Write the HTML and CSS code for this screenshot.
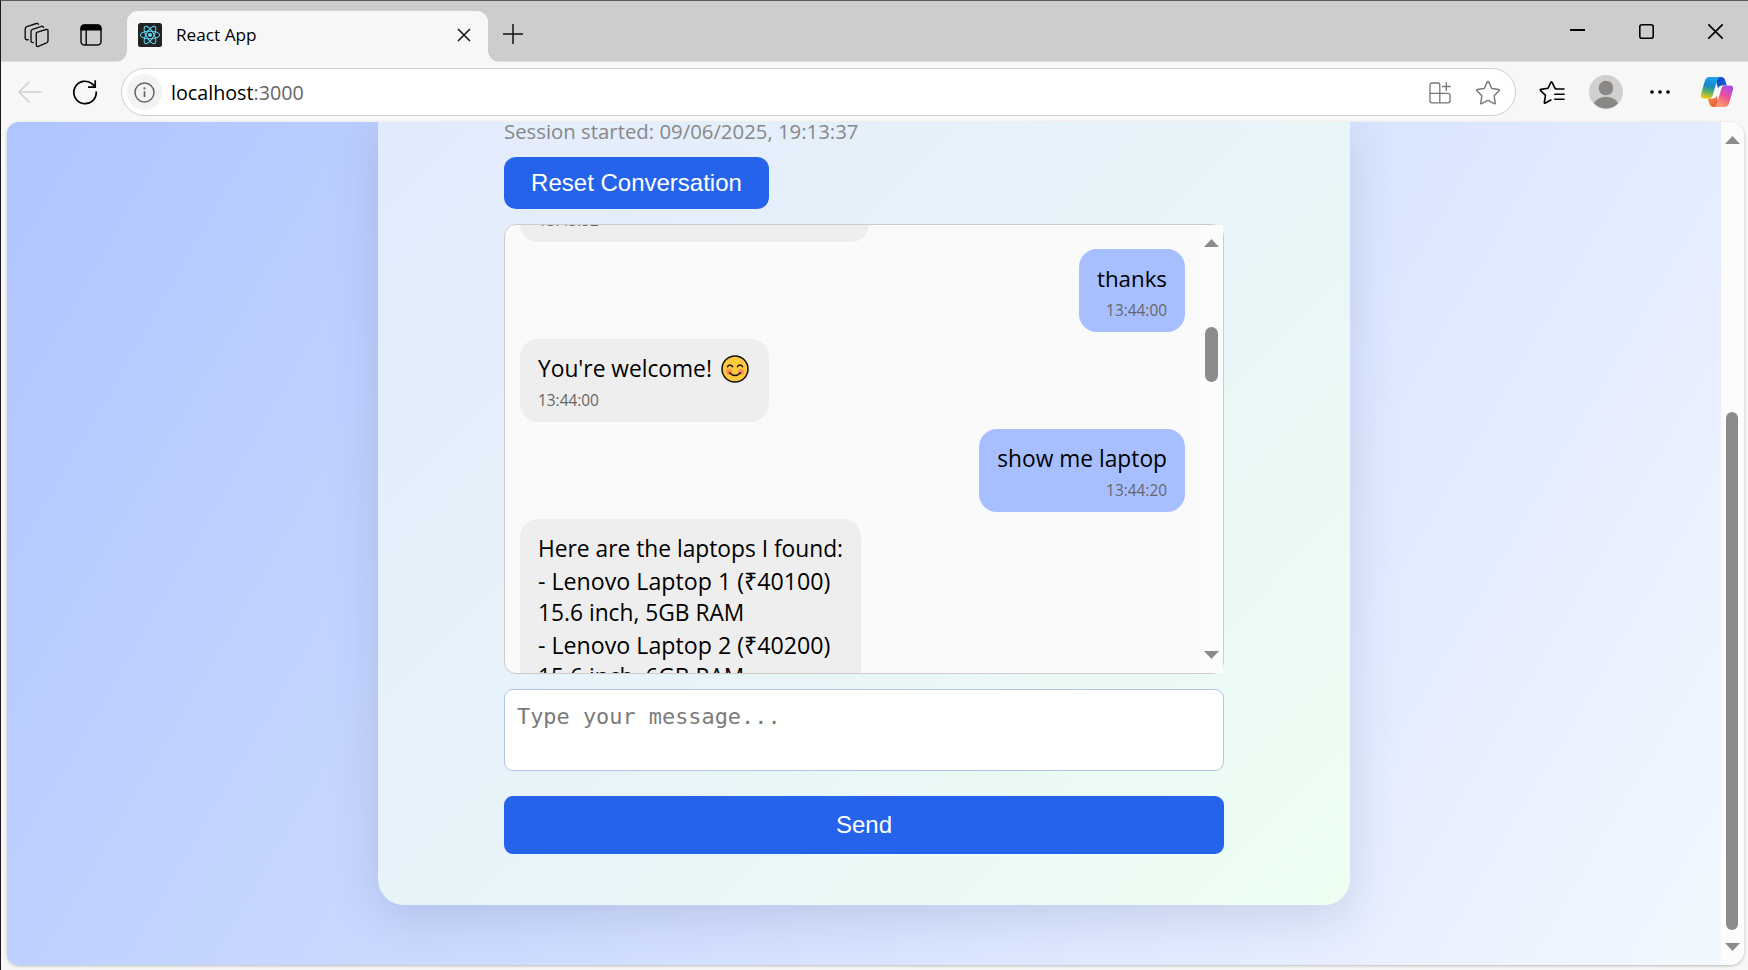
FILE: index.html
```html
<!DOCTYPE html>
<html lang="en">
<head>
<meta charset="utf-8">
<title>React App</title>
<link rel="stylesheet" href="styles.css">
</head>
<body>
<div class="window">
  <header class="titlebar">
    <div class="tab-tools">
      <svg class="icon-workspaces" width="26" height="26" viewBox="0 0 26 26" fill="none" stroke="#111" stroke-width="1.4" stroke-linejoin="round" stroke-linecap="round">
        <path d="M12.800 10.400 22 7.500q2-.5 2 1.500v9.700q0 1.600-1.500 2.100l-8.200 3.500q-2 .6-2-1.300V12q0-1.200 .5-1.600z"/>
        <path d="M9.400 20.600q-2.400.2-2.400-1.700V9.400q0-1.600 1.600-2.100L17.400 4.400q1.700-.4 2.100.9"/>
        <path d="M4.200 17.800q-3 .2-3-1.900V7q0-1.700 1.700-2.300L12.300 1.500q1.500-.4 2.100.8"/>
      </svg>
      <svg class="icon-vertical-tabs" width="24" height="24" viewBox="0 0 24 24" fill="none" stroke="#111" stroke-width="1.5">
        <rect x="2" y="2" width="20" height="20" rx="3.500"/>
        <path d="M1.500 7.500V5q0-3.500 3.500-3.500h14q3.500 0 3.500 3.500v2.500z" fill="#000" stroke="none"/>
        <path d="M7.200 7v15"/>
      </svg>
    </div>
    <div class="tab">
      <svg width="24" height="24" viewBox="0 0 24 24">
        <rect width="24" height="24" rx="2.500" fill="#222"/>
        <g fill="none" stroke="#61dafb" stroke-width="1">
          <ellipse cx="12" cy="12" rx="9.800" ry="3.800"/>
          <ellipse cx="12" cy="12" rx="9.800" ry="3.800" transform="rotate(60 12 12)"/>
          <ellipse cx="12" cy="12" rx="9.800" ry="3.800" transform="rotate(120 12 12)"/>
        </g>
        <circle cx="12" cy="12" r="2" fill="#61dafb"/>
      </svg>
      <span class="tab-title">React App</span>
      <svg class="tab-close" width="14" height="14" viewBox="0 0 14 14" stroke="#111" stroke-width="1.500"><path d="M1 1l12 12M13 1 1 13"/></svg>
    </div>
    <svg class="new-tab" width="20" height="20" viewBox="0 0 20 20" stroke="#111" stroke-width="1.500"><path d="M10 0v20M0 10h20"/></svg>
    <div class="window-controls">
      <svg width="15" height="15" viewBox="0 0 15 15" stroke="#000" stroke-width="2"><path d="M0 6h15"/></svg>
      <svg width="15" height="15" viewBox="0 0 15 15" fill="none" stroke="#000" stroke-width="1.600"><rect x=".8" y=".8" width="13.400" height="13.400" rx="2"/></svg>
      <svg width="15" height="15" viewBox="0 0 15 15" stroke="#000" stroke-width="1.600"><path d="M.3.3l14.400 14.400M14.700.3.300 14.700"/></svg>
    </div>
  </header>

  <div class="toolbar">
    <svg class="back" width="24" height="22" viewBox="0 0 24 22" fill="none" stroke="#cfcfcf" stroke-width="1.500" stroke-linecap="round" stroke-linejoin="round"><path d="M23 11H1M11 1 1 11l10 10"/></svg>
    <svg class="reload" width="26" height="26" viewBox="0 0 26 26" fill="none" stroke="#000" stroke-width="1.700"><path d="M24.200 12.500A11.200 11.200 0 1 1 20.600 5.200L23 7.800M23.200 1.200v6.900h-7.200"/></svg>
    <div class="address">
      <span class="site-info">
        <svg width="21" height="21" viewBox="0 0 21 21" fill="none" stroke="#666" stroke-width="1.500"><circle cx="10.500" cy="10.500" r="9.500"/><path d="M10.500 9.200v5.800" stroke-width="1.700"/><circle cx="10.500" cy="6.400" r="1.100" fill="#666" stroke="none"/></svg>
      </span>
      <span class="url">localhost<span class="port">:3000</span></span>
      <svg class="apps" width="22" height="23" viewBox="0 0 22 23" fill="none" stroke="#777" stroke-width="1.300"><path d="M10.800 21.800V4q0-2-2-2H3Q1 2 1 4v15.800q0 2 2 2h16q2 0 2-2v-5.500q0-2-2-2H1M17.300 1v9M13 5.500h8.700"/></svg>
      <svg class="star" width="26" height="25" viewBox="0 0 26 25" fill="none" stroke="#777" stroke-width="1.400" stroke-linejoin="round"><path d="M13 1.500q.5 0 .8.600l3 6.400 6.800 1q1.400.3.500 1.300l-5 5 1.200 7q.2 1.400-1.100.8L13 20.300l-6.200 3.300q-1.300.6-1.100-.8l1.200-7-5-5q-.9-1 .5-1.300l6.800-1 3-6.400q.3-.6.800-.6z"/></svg>
    </div>
    <svg class="favorites" width="26" height="25" viewBox="0 0 26 25" fill="none" stroke="#000" stroke-width="1.600" stroke-linecap="round" stroke-linejoin="round"><path d="M17 8.500 16 8.300l-2.900-6q-.6-1-1.200 0L8.900 8.300 2 9.400q-1.200.3-.4 1.200l4.900 4.800-1.200 7q-.1 1.100 1 .6l5.600-3M16.500 9H25M15.800 14.200H25M15.800 19.200H25"/></svg>
    <svg class="avatar" width="34" height="34" viewBox="0 0 34 34">
      <clipPath id="avatar-clip"><circle cx="17" cy="17" r="16.500"/></clipPath>
      <circle cx="17" cy="17" r="17" fill="#d2d0ce"/>
      <g fill="#8a8886" clip-path="url(#avatar-clip)"><circle cx="17" cy="13" r="7.300"/><ellipse cx="17" cy="31" rx="12.500" ry="9.300"/></g>
    </svg>
    <svg class="more" width="20" height="4" viewBox="0 0 20 4"><circle cx="2" cy="2" r="1.800"/><circle cx="10" cy="2" r="1.800"/><circle cx="18" cy="2" r="1.800"/></svg>
    <svg class="copilot" width="34" height="32" viewBox="0 0 34 32">
      <defs>
        <linearGradient id="cp-a" x1=".5" y1="0" x2=".3" y2="1"><stop offset="0" stop-color="#1fa3ee"/><stop offset=".4" stop-color="#1687c8"/><stop offset=".65" stop-color="#4eae70"/><stop offset="1" stop-color="#f4cf0b"/></linearGradient>
        <linearGradient id="cp-b" x1=".8" y1="0" x2=".3" y2="1"><stop offset="0" stop-color="#a44bf0"/><stop offset=".5" stop-color="#ee5396"/><stop offset="1" stop-color="#ffa368"/></linearGradient>
        <linearGradient id="cp-c" x1="0" y1="0" x2="1" y2=".6"><stop offset="0" stop-color="#0c3fb5"/><stop offset="1" stop-color="#1c62e0"/></linearGradient>
        <linearGradient id="cp-d" x1="0" y1="0" x2="1" y2="1"><stop offset="0" stop-color="#f59a3d"/><stop offset="1" stop-color="#e8483f"/></linearGradient>
      </defs>
      <path d="M15 1h6.500q2.600 0 3.500 2.800L26.800 9.500H22q-3 0-4 3z" fill="url(#cp-c)"/>
      <path d="M19 31h-6q-2.600 0-3.400-2.800L7.800 22.500H13q3 0 3.800-3z" fill="url(#cp-d)"/>
      <path d="M9.500 1H20q-2 .6-2.900 3.600l-4.500 14.800q-1 3.100-4.200 3.100H4Q-.2 22.500 1.200 17.400L4.800 5Q6 1 9.500 1z" fill="url(#cp-a)"/>
      <path d="M24.500 31H14q2-.6 2.900-3.600l4.500-14.800q1-3.100 4.200-3.100H30q4.200 0 2.800 5.100L29.200 27q-1.200 4-4.700 4z" fill="url(#cp-b)"/>
    </svg>
  </div>

  <div class="viewport">
    <main class="page">
      <section class="card">
        <p class="session">Session started: 09/06/2025, 19:13:37</p>
        <button class="reset">Reset Conversation</button>
        <div class="chat">
          <div class="pane">
            <div class="messages">
              <div class="message bot clipped"><span class="time">13:43:52</span></div>
              <div class="message user"><span class="short">thanks</span><span class="time">13:44:00</span></div>
              <div class="message bot">
                <span class="with-emoji">You're welcome!
                  <svg width="28" height="28" viewBox="0 0 28 28" fill="none" stroke="#111" stroke-width="1.500" stroke-linecap="round">
                    <circle cx="14" cy="14" r="13" fill="#ffc93d"/>
                    <circle cx="8" cy="17" r="3" fill="#ff8f5a" stroke="none"/><circle cx="20" cy="17" r="3" fill="#ff8f5a" stroke="none"/>
                    <path d="M6.500 11.600q2.500-3 5 0M16.500 11.600q2.500-3 5 0M8.500 17.800q5.500 5.600 11 0"/>
                  </svg>
                </span>
                <span class="time">13:44:00</span>
              </div>
              <div class="message user"><span>show me laptop</span><span class="time">13:44:20</span></div>
              <div class="message bot listing">
                <span>Here are the laptops I found:</span>
                <span class="product">- Lenovo Laptop 1 (₹40100)</span>
                <span>15.6 inch, 5GB RAM</span>
                <span class="product">- Lenovo Laptop 2 (₹40200)</span>
                <span>15.6 inch, 6GB RAM</span>
              </div>
            </div>
          </div>
          <div class="scrollbar chat-scroll">
            <svg width="15" height="8" viewBox="0 0 15 8"><path d="M0 8 7.500 0 15 8z"/></svg>
            <div class="track"><div class="thumb"></div></div>
            <svg width="15" height="8" viewBox="0 0 15 8"><path d="M0 0 7.500 8 15 0z"/></svg>
          </div>
        </div>
        <textarea class="composer" placeholder="Type your message..."></textarea>
        <button class="send">Send</button>
      </section>
    </main>
    <div class="scrollbar page-scroll">
      <svg width="15" height="8" viewBox="0 0 15 8"><path d="M0 8 7.500 0 15 8z"/></svg>
      <div class="track"><div class="thumb"></div></div>
      <svg width="15" height="8" viewBox="0 0 15 8"><path d="M0 0 7.500 8 15 0z"/></svg>
    </div>
  </div>
</div>
</body>
</html>
```
FILE: styles.css
```css
* { box-sizing: border-box; }
body { margin: 0; font-family: "Open Sans", "Noto Sans", sans-serif; color: #000; }
svg { display: block; flex: none; }
button { border: 0; padding: 0; color: #fff; background: #2563eb; font: 24px "Liberation Sans", Arial, sans-serif; }

.window {
  width: 1748px; height: 970px; overflow: hidden;
  display: flex; flex-direction: column;
  background: #f7f7f7;
  border-top: 1px solid #5c5a5c; border-left: 1px solid #1c1a1c;
}

/* Title bar */
.titlebar { height: 61px; flex: none; display: flex; background: #cdcdcd; border-bottom: 1px solid #e2e2e2; }
.tab-tools { width: 126px; display: flex; align-items: flex-start; padding: 21px 0 0 23px; gap: 29px; }
.icon-vertical-tabs { margin-top: 1px; }
.tab {
  position: relative; z-index: 1; width: 361px; height: 51px; margin-top: 10px; margin-bottom: -1px;
  padding: 0 17px 4px 11px;
  display: flex; align-items: center;
  background: #f7f7f7; border-radius: 11px 11px 0 0;
}
.tab::before, .tab::after {
  content: ""; position: absolute; bottom: 0; width: 11px; height: 11px;
}
.tab::before { left: -11px; background: radial-gradient(circle at 0 0, transparent 10.500px, #f7f7f7 11px); }
.tab::after { right: -11px; background: radial-gradient(circle at 100% 0, transparent 10.500px, #f7f7f7 11px); }
.tab-title { margin-left: 14px; font-size: 17.200px; }
.tab-close { margin-left: auto; }
.new-tab { margin: 23px 0 0 15px; }
.window-controls { margin-left: auto; display: flex; gap: 54px; padding: 23px 25px 0 0; }

/* Toolbar */
.toolbar { height: 60px; flex: none; display: flex; align-items: center; padding: 0 14px 0 17px; }
.reload { margin-left: 30px; }
.address {
  width: 1395px; height: 48px; margin-left: 23px; padding: 0 14px 0 5px;
  display: flex; align-items: center;
  background: #fff; border: 1.500px solid #cfcfcf; border-radius: 24px;
}
.site-info { width: 35px; height: 36px; border-radius: 50%; background: #f3f3f3; display: grid; place-items: center; }
.url { margin-left: 9px; font-size: 19.700px; }
.port { color: #666; }
.apps { margin-left: auto; }
.star { margin-left: 24px; }
.favorites { margin-left: 23px; }
.avatar { margin-left: 24px; }
.more { margin-left: 27px; }
.copilot { margin-left: auto; }

/* Page area */
.viewport {
  width: 1737px; height: 843px; margin-left: 6px; flex: none;
  display: flex; overflow: hidden; border-radius: 12px 14px 14px 12px;
  box-shadow: 0 1px 3px rgba(0, 0, 0, .25);
}
.page {
  flex: 1; overflow: hidden; display: flex; justify-content: center; align-items: flex-start;
  background: linear-gradient(120deg, #afc5ff, #f3f8ff);
}
.card {
  width: 972px; height: 783px; padding: 0 126px;
  display: flex; flex-direction: column; align-items: flex-start;
  background: linear-gradient(135deg, #e2ebfd, #e8f4f9 50%, #eefff2);
  border-radius: 0 0 26px 26px;
  box-shadow: 0 12px 48px rgba(60, 80, 130, .18);
}
.session { margin: -5px 0 0; height: 40px; line-height: 28px; font-size: 20.350px; color: #888; }
.reset { width: 265px; height: 52px; border-radius: 12px; }

.chat {
  width: 720px; height: 450px; margin-top: 15px; flex: none; display: flex;
  background: #fafafa; border: 1px solid #ccc; border-radius: 12px;
}
.pane { flex: 1; overflow: hidden; border-radius: 11px 0 0 11px; }
.messages { margin-top: -66px; padding: 0 15px; display: flex; flex-direction: column; align-items: flex-start; gap: 7px; }
.message {
  flex: none; display: flex; flex-direction: column; padding: 14px 18px 10px;
  font-size: 22.750px; line-height: 32px; white-space: nowrap; border-radius: 18px; min-height: 83px;
}
.bot { background: #eee; }
.user { align-self: flex-end; align-items: flex-end; background: #a7bfff; }
.clipped { width: 349px; justify-content: flex-end; }
.short { font-size: 22.300px; }
.time { margin-top: 5px; font-size: 15.400px; line-height: 22px; color: #666; }
.with-emoji { display: flex; align-items: center; gap: 9px; padding-right: 2px; }
.with-emoji svg { margin-top: -1px; }
.listing { width: 341px; }
.product { font-size: 23.200px; }

/* Scrollbars */
.scrollbar { display: flex; flex-direction: column; align-items: center; background: #fcfcfc; fill: #8b8b8b; }
.track { flex: 1; width: 100%; display: flex; justify-content: center; }
.thumb { background: #8b8b8b; border-radius: 7px; }
.chat-scroll { width: 23px; padding: 14px 0; }
.chat-scroll .thumb { width: 13px; height: 55px; margin-top: 80px; }
.page-scroll { width: 23px; padding: 14px 1px 14px 0; }
.page-scroll .thumb { width: 12px; height: 518px; margin-top: 268px; }

.composer {
  width: 720px; height: 82px; margin: 15px 0 0; padding: 11px 12px; flex: none; resize: none;
  border: 1px solid #b4c3e6; border-radius: 9px; background: #fff;
  font: 21.900px/31px "DejaVu Sans Mono", monospace;
}
.composer::placeholder { color: #7b7b7b; }
.send { width: 720px; height: 58px; margin-top: 25px; flex: none; border-radius: 9px; }
```
